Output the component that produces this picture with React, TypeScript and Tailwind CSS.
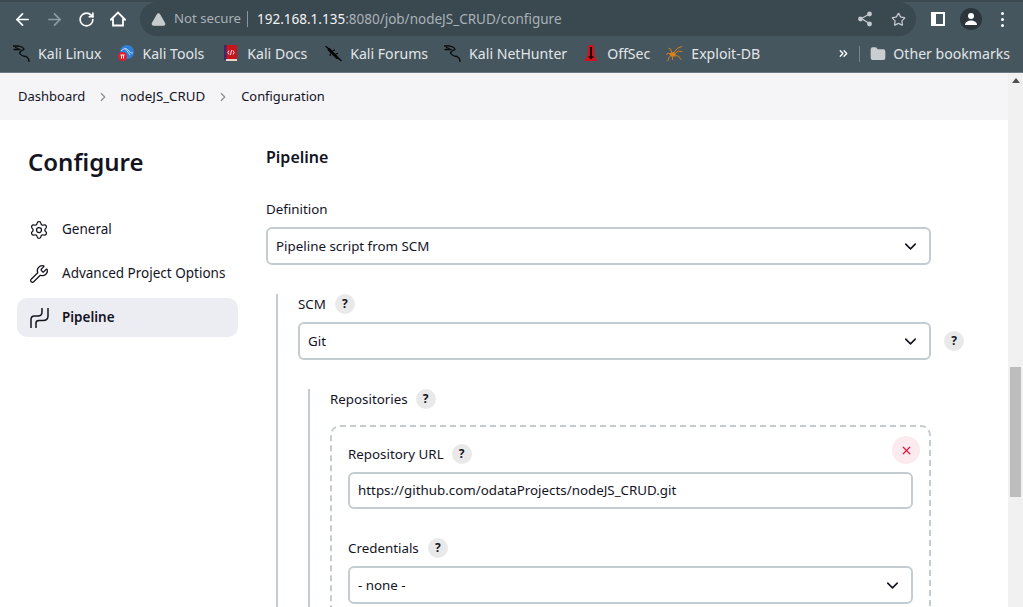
import React from 'react';
import { ArrowLeft, ArrowRight, RotateCw, TriangleAlert, Star, ChevronDown, ChevronRight, ChevronsRight, Folder, Settings, Wrench, X } from 'lucide-react';

const KaliDragon = () => (
    <svg width="17" height="17" viewBox="0 0 17 17" fill="none" stroke="#0b0b0b" strokeWidth="1.300" strokeLinecap="round" strokeLinejoin="round">
        <path d="M.5 1H6Q11 2.500 11 4.500 7 6 6.500 8 8 11 13 11.500 16 13 16 16.500" />
        <path d="M1 4.500H7" />
        <path d="M2.500 2.500 5 3.500" />
    </svg>
);

const KaliTools = () => (
    <svg width="16" height="16" viewBox="0 0 16 16">
        <circle cx="9" cy="7" r="7" fill="#2f80d8" />
        <path d="M3 6c3-3 6-3 7-1s3 3 5 3M6 3c2 1 3 3 6 7" stroke="#b9d9f5" strokeWidth="1" fill="none" />
        <circle cx="4.500" cy="11.500" r="4.500" fill="#e11d2a" />
        <path d="M2.500 10h4M3.500 10v3.500M5.500 10v3.500" stroke="#fff" strokeWidth="1" />
    </svg>
);

const KaliDocs = () => (
    <svg width="13" height="16" viewBox="0 0 13 16">
        <rect x="0" y="0" width="13" height="15" rx="1" fill="#c8141c" />
        <rect x="0" y="0" width="2.500" height="15" fill="#3b2a6b" />
        <rect x="2" y="14" width="11" height="2" fill="#e6d6c8" />
        <path d="M5 5.500 3.800 7.500 5 9.500M9 5.500l1.200 2-1.200 2M7.800 5l-1.500 5" stroke="#fff" strokeWidth="0.9" fill="none" />
    </svg>
);

const KaliForums = () => (
    <svg width="17" height="17" viewBox="0 0 17 17" fill="none" stroke="#050505" strokeLinecap="round">
        <path d="M1 1.500 5 5" strokeWidth="1.200" />
        <path d="M4 4.500 12 12.500" strokeWidth="3" />
        <path d="M12 12l4 3.500" strokeWidth="1.500" />
        <path d="M8 5.500 9.500 5M5.500 9 5 10.500M11 9l1.500-.5" strokeWidth="1.200" />
    </svg>
);

const OffSec = () => (
    <svg width="14" height="17" viewBox="0 0 14 17">
        <path d="M4.500 0h5l1 11 3 5H0l3.500-5z" fill="#d3121c" />
        <path d="M7 2v12" stroke="#1a0505" strokeWidth="2" />
        <path d="M4.500 12h5" stroke="#1a0505" strokeWidth="1.500" />
    </svg>
);

const ExploitDb = () => (
    <svg width="18" height="17" viewBox="0 0 18 17" fill="none" stroke="#d9801c" strokeWidth="1" strokeLinecap="round">
        <ellipse cx="7" cy="9.500" rx="2.800" ry="2" fill="#d9801c" />
        <path d="M8 8 12 3l5-2M9 9l4-3 4 .500M9 11l4 0 3 4M6 8 5 4 3 3M5 9 2 8 .500 10M5 11l-2 2-1 3M7 12l0 3" />
    </svg>
);

const PipelineIcon = () => (
    <svg width="20" height="20" viewBox="0 0 20 20" fill="none" stroke="#14141f" strokeWidth="1.500" strokeLinecap="round">
        <path d="M2 19.500V11.500Q2 8 5.500 8H9Q13 8 13 4V.5" />
        <path d="M7 19.500V15Q7 12.500 10 12.500H14Q19 12.500 19 8V.5" />
    </svg>
);

const HelpBadge = () => (
    <span className="flex h-5 w-5 items-center justify-center rounded-full bg-[#e9e9ea] text-[12px] font-bold leading-none text-[#14141f]">?</span>
);

const SelectBox = ({ value, className }: { value: string; className: string }) => (
    <div className={`flex h-[38px] items-center justify-between rounded-md border-2 border-[#c3ccd1] bg-white pl-2 pr-[9px] text-[13.350px] text-[#14141f] ${className}`}>
        <span>{value}</span>
        <ChevronDown size={19} strokeWidth={2} color="#14141f" />
    </div>
);

const Bookmark = ({ icon, label, className }: { icon: React.ReactNode; label: string; className: string }) => (
    <div className={`flex items-center ${className}`}>
        <span className="flex w-[17px] items-center justify-center">{icon}</span>
        <span className="ml-[8px] text-[14.100px] text-[#e3e6e8]">{label}</span>
    </div>
);

const NavItem = ({ icon, label, active }: { icon: React.ReactNode; label: string; active?: boolean }) => (
    <div className={`flex h-[39px] w-[221px] items-center rounded-[10px] pl-[12px] text-[13.500px] ${active ? 'bg-[#ecedf2] font-semibold' : ''}`}>
        <span className="flex w-5 items-center justify-center">{icon}</span>
        <span className="ml-[13px]">{label}</span>
    </div>
);

export default function App() {
    return (
        <div className="flex h-[607px] w-[1023px] flex-col overflow-hidden bg-white font-['Noto_Sans',sans-serif] text-[#14141f]">
            {/* browser toolbar */}
            <div className="flex h-[36px] shrink-0 items-center border-t-2 border-[#3a4850] bg-[#45565f] pl-[13px]">
                <ArrowLeft size={19} color="#ffffff" strokeWidth={2.200} />
                <ArrowRight size={19} color="#8f9ba1" strokeWidth={2.200} className="ml-[13px]" />
                <RotateCw size={17} color="#ffffff" strokeWidth={2.400} className="ml-[14px]" />
                <svg className="ml-[15px]" width="16" height="16" viewBox="0 0 16 16" fill="none" stroke="#ffffff" strokeWidth="1.800" strokeLinejoin="miter">
                    <path d="M1 8.500 8 1.500l7 7h-2v6H3v-6z" />
                </svg>
                <div className="ml-[14px] flex h-[34px] w-[776px] items-center rounded-full bg-[#3a4850] pl-[11px]">
                    <TriangleAlert size={15} fill="#c6cbce" color="#c6cbce" />
                    <span className="ml-[8px] text-[13.200px] text-[#a9b2b7]">Not secure</span>
                    <span className="ml-[6px] h-[16px] w-px bg-[#8a969c]" />
                    <span className="ml-[9px] text-[13.500px] text-[#f1f3f4]">192.168.1.135<span className="text-[#a9b2b7]">:8080/job/nodeJS_CRUD/configure</span></span>
                    <svg className="ml-auto" width="16" height="16" viewBox="0 0 16 16" fill="none" stroke="#c4cacd" strokeWidth="1.200">
                        <path d="M11.500 3.500 4.500 7.500l7 4.500" />
                        <circle cx="12.500" cy="3" r="1.800" fill="#c4cacd" />
                        <circle cx="3.500" cy="8" r="1.800" fill="#c4cacd" />
                        <circle cx="12.500" cy="13" r="1.800" fill="#c4cacd" />
                    </svg>
                    <Star size={15} color="#c4cacd" strokeWidth={2} className="ml-[18px] mr-[10px]" />
                </div>
                <div className="ml-[15px] flex h-[14px] w-[14px] justify-end border-2 border-white bg-white">
                    <span className="h-full w-[7px] bg-[#45565f]" />
                </div>
                <div className="ml-[15px] flex h-[22px] w-[22px] items-center justify-center rounded-full bg-[#2b363c]">
                    <svg width="14" height="14" viewBox="0 0 14 14" fill="#ffffff">
                        <circle cx="7" cy="4" r="3" />
                        <path d="M1 13c0-3 3-4.500 6-4.500s6 1.500 6 4.500z" />
                    </svg>
                </div>
                <div className="ml-[19px] flex flex-col gap-[3px]">
                    <span className="h-[3px] w-[3px] rounded-full bg-white" />
                    <span className="h-[3px] w-[3px] rounded-full bg-white" />
                    <span className="h-[3px] w-[3px] rounded-full bg-white" />
                </div>
            </div>

            {/* bookmarks */}
            <div className="flex h-[37px] shrink-0 items-center border-b border-[#6b7a82] bg-[#45565f] pb-[1px] pl-[13px] pr-[13px]">
                <Bookmark icon={<KaliDragon />} label="Kali Linux" className="" />
                <Bookmark icon={<KaliTools />} label="Kali Tools" className="ml-[16px]" />
                <Bookmark icon={<KaliDocs />} label="Kali Docs" className="ml-[18px]" />
                <Bookmark icon={<KaliForums />} label="Kali Forums" className="ml-[18px]" />
                <Bookmark icon={<KaliDragon />} label="Kali NetHunter" className="ml-[16px]" />
                <Bookmark icon={<OffSec />} label="OffSec" className="ml-[15px]" />
                <Bookmark icon={<ExploitDb />} label="Exploit-DB" className="ml-[16px]" />
                <ChevronsRight size={13} color="#ffffff" strokeWidth={2.500} className="ml-auto" />
                <span className="ml-[9px] h-[16px] w-px bg-[#76848b]" />
                <Folder size={16} fill="#c9ced1" color="#c9ced1" className="ml-[10px]" />
                <span className="ml-[7px] text-[14.100px] text-[#e3e6e8]">Other bookmarks</span>
            </div>

            <div className="flex min-h-0 flex-1">
                <div className="flex min-w-0 flex-1 flex-col">
                    {/* breadcrumb */}
                    <div className="flex h-[47px] shrink-0 items-center bg-[#f5f5f8] pl-[18px] text-[13px]">
                        <span>Dashboard</span>
                        <ChevronRight size={14} color="#8c8c94" className="ml-[11px] mr-[10px]" />
                        <span className="text-[13.300px]">nodeJS_CRUD</span>
                        <ChevronRight size={14} color="#8c8c94" className="mx-[11px]" />
                        <span className="text-[12.900px]">Configuration</span>
                    </div>

                    <div className="flex min-h-0 flex-1">
                        {/* sidebar */}
                        <div className="w-[249px] shrink-0 pl-[17px]">
                            <h1 className="ml-[11px] mt-[24px] text-[24px] font-semibold leading-[36px]">Configure</h1>
                            <div className="mt-[30px] flex flex-col gap-[5px]">
                                <NavItem icon={<Settings size={20} strokeWidth={1.500} />} label="General" />
                                <NavItem icon={<Wrench size={20} strokeWidth={1.500} />} label="Advanced Project Options" />
                                <NavItem icon={<PipelineIcon />} label="Pipeline" active />
                            </div>
                        </div>

                        {/* form */}
                        <div className="min-w-0 flex-1 pl-[17px]">
                            <h2 className="mt-[25px] text-[16px] font-semibold leading-[24px]">Pipeline</h2>
                            <div className="mt-[30px] text-[13.350px] leading-[20px]">Definition</div>
                            <SelectBox value="Pipeline script from SCM" className="mt-[8px] w-[665px]" />

                            <div className="ml-[10px] mt-[29px] w-[710px] border-l-2 border-[#c3ccd1] pl-[20px] pt-0">
                                <div className="flex h-[20px] items-center text-[13.350px]">
                                    SCM
                                    <span className="ml-[9px]"><HelpBadge /></span>
                                </div>
                                <div className="mt-[8px] flex items-center">
                                    <SelectBox value="Git" className="w-[633px]" />
                                    <span className="ml-[13px]"><HelpBadge /></span>
                                </div>

                                <div className="ml-[10px] mt-[29px] border-l-2 border-[#c3ccd1] pl-[20px]">
                                    <div className="flex h-[20px] items-center text-[13.350px]">
                                        Repositories
                                        <span className="ml-[8px]"><HelpBadge /></span>
                                    </div>
                                    <div className="relative mt-[16px] w-[601px] rounded-[10px] border-2 border-dashed border-[#c3ccd1] px-[16px] pt-[17px]">
                                        <button className="absolute right-[9px] top-[9px] flex h-[28px] w-[28px] items-center justify-center rounded-full bg-[#fcebee]">
                                            <X size={13} color="#e6133c" strokeWidth={2.200} />
                                        </button>
                                        <div className="flex h-[20px] items-center text-[13.350px]">
                                            Repository URL
                                            <span className="ml-[8px]"><HelpBadge /></span>
                                        </div>
                                        <div className="mt-[8px] flex h-[37px] w-[565px] items-center rounded-md border-2 border-[#c3ccd1] pl-2 text-[13.350px]">
                                            https://github.com/odataProjects/nodeJS_CRUD.git
                                        </div>
                                        <div className="mt-[29px] flex h-[20px] items-center text-[13.350px]">
                                            Credentials
                                            <span className="ml-[9px]"><HelpBadge /></span>
                                        </div>
                                        <SelectBox value="- none -" className="mt-[8px] w-[565px]" />
                                        <div className="h-[40px]" />
                                    </div>
                                </div>
                            </div>
                        </div>
                    </div>
                </div>

                {/* scrollbar */}
                <div className="flex w-[15px] shrink-0 flex-col bg-[#f1f1f1] pl-[2px] pr-px">
                    <div className="mt-[5px] h-0 w-0 self-center border-x-[4px] border-b-[5px] border-x-transparent border-b-[#505050]" />
                    <div className="mt-[284px] h-[130px] w-[11px] bg-[#bdbdbd]" />
                </div>
            </div>
        </div>
    );
}
